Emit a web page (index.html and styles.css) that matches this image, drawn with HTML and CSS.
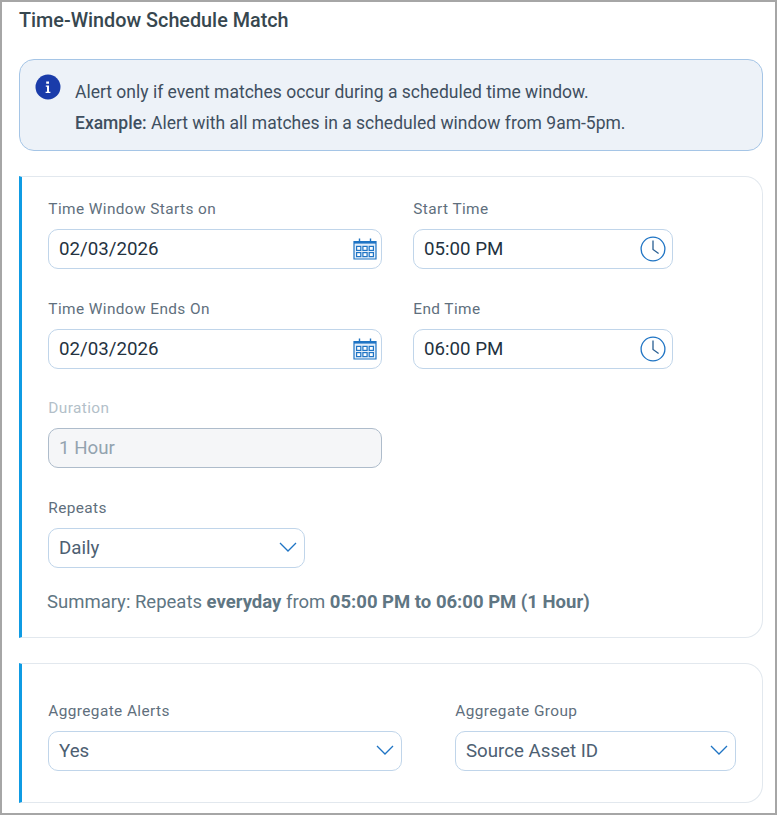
FILE: index.html
```html
<!DOCTYPE html>
<html lang="en">
<head>
<meta charset="utf-8">
<title>Time-Window Schedule Match</title>
<link rel="stylesheet" href="styles.css">
</head>
<body>
<main class="frame">
  <h1 class="title">Time-Window Schedule Match</h1>
  <section class="info">
    <svg class="info-icon" width="26" height="26" viewBox="0 0 26 26" aria-hidden="true">
      <circle cx="13" cy="13" r="12.5" fill="#1a3caa"/>
      <path d="M11.2 7.6h2.8v2.2h-2.8zM10.8 11.6h3.2v6.2h1.4v1.2h-4.8v-1.2h1.4v-5h-1.2z" fill="#fff"/>
    </svg>
    <div class="info-text">
      <p>Alert only if event matches occur during a scheduled time window.</p>
      <p><b>Example:</b> Alert with all matches in a scheduled window from 9am-5pm.</p>
    </div>
  </section>

  <section class="card card-schedule">
    <div class="grid-time">
      <div class="field">
        <label class="label">Time Window Starts on</label>
        <div class="input dark">02/03/2026
          <svg class="cal" width="24" height="24" viewBox="0 0 24 24" aria-hidden="true"><use href="#i-cal"/></svg>
        </div>
      </div>
      <div class="field">
        <label class="label">Start Time</label>
        <div class="input dark">05:00 PM
          <svg class="clk" width="26" height="26" viewBox="0 0 26 26" aria-hidden="true"><use href="#i-clk"/></svg>
        </div>
      </div>
      <div class="field">
        <label class="label">Time Window Ends On</label>
        <div class="input dark">02/03/2026
          <svg class="cal" width="24" height="24" viewBox="0 0 24 24" aria-hidden="true"><use href="#i-cal"/></svg>
        </div>
      </div>
      <div class="field">
        <label class="label">End Time</label>
        <div class="input dark">06:00 PM
          <svg class="clk" width="26" height="26" viewBox="0 0 26 26" aria-hidden="true"><use href="#i-clk"/></svg>
        </div>
      </div>
      <div class="field field-duration">
        <label class="label label-off">Duration</label>
        <div class="input disabled">1 Hour</div>
      </div>
    </div>
    <div class="field field-repeats">
      <label class="label">Repeats</label>
      <div class="input select">Daily
        <svg class="chev" width="18" height="10" viewBox="0 0 18 10" aria-hidden="true"><use href="#i-chev"/></svg>
      </div>
    </div>
    <p class="summary">Summary: Repeats <b>everyday</b> from <b>05:00 PM to 06:00 PM (1 Hour)</b></p>
  </section>

  <section class="card card-agg">
    <div class="field">
      <label class="label">Aggregate Alerts</label>
      <div class="input select">Yes
        <svg class="chev" width="18" height="10" viewBox="0 0 18 10" aria-hidden="true"><use href="#i-chev"/></svg>
      </div>
    </div>
    <div class="field">
      <label class="label">Aggregate Group</label>
      <div class="input select">Source Asset ID
        <svg class="chev" width="18" height="10" viewBox="0 0 18 10" aria-hidden="true"><use href="#i-chev"/></svg>
      </div>
    </div>
  </section>
</main>

<svg class="defs" width="0" height="0" aria-hidden="true">
  <defs>
    <symbol id="i-cal" viewBox="0 0 24 24">
      <path d="M1 4.5h22v17.5H1z" fill="#e3eefa" stroke="#1f74c4" stroke-width="1.2"/>
      <path d="M1 4h22v2.6H1z" fill="#1f74c4"/>
      <path d="M6.5 1.5v4M17.5 1.5v4" stroke="#1f74c4" stroke-width="1.4" fill="none"/>
      <g fill="#fff" stroke="#1f74c4" stroke-width="1.2">
        <rect x="3.6" y="9.4" width="4.2" height="4"/>
        <rect x="9.9" y="9.4" width="4.2" height="4"/>
        <rect x="16.2" y="9.4" width="4.2" height="4"/>
        <rect x="3.6" y="15.6" width="4.2" height="4"/>
        <rect x="9.9" y="15.6" width="4.2" height="4"/>
        <rect x="16.2" y="15.6" width="4.2" height="4"/>
      </g>
    </symbol>
    <symbol id="i-clk" viewBox="0 0 26 26">
      <circle cx="13" cy="13" r="11.9" fill="none" stroke="#1f74c4" stroke-width="1.3"/>
      <path d="M13 4.5V13.5L18.6 17.6" fill="none" stroke="#2a5f93" stroke-width="1.3"/>
    </symbol>
    <symbol id="i-chev" viewBox="0 0 18 10">
      <path d="M1 1l8 8 8-8" fill="none" stroke="#1f74c4" stroke-width="1.3"/>
    </symbol>
  </defs>
</svg>
</body>
</html>
```
FILE: styles.css
```css
* { box-sizing: border-box; }
html, body { margin: 0; padding: 0; background: #fff; }
body { font-family: Roboto, "Liberation Sans", sans-serif; }
.frame {
  width: 777px;
  height: 815px;
  border: 2px solid #a6a6a6;
  padding: 9px 12px 0 17px;
  overflow: hidden;
  background: #fff;
}
.title {
  margin: 0 0 28px;
  font-size: 19.8px;
  line-height: 20px;
  font-weight: 500;
  color: #37474f;
}
.info {
  height: 92px;
  display: flex;
  gap: 14px;
  padding: 14px 16px 0 15px;
  border: 1px solid #a5c5e6;
  border-radius: 15px;
  background: #edf2f8;
}
.info-icon { flex: none; }
.info-text { padding-top: 3px; }
.info-text p {
  margin: 0;
  font-size: 17.5px;
  line-height: 31px;
  color: #3f4f60;
}
.info-text b { font-weight: 500; }
.card {
  width: 744px;
  border: 1px solid #e2e8ee;
  border-left: 3px solid #0f9be3;
  border-radius: 0 18px 18px 0;
  background: #fff;
}
.card-schedule {
  height: 462px;
  margin-top: 25px;
  padding: 21px 0 0 26px;
}
.card-agg {
  height: 140px;
  margin-top: 25px;
  padding: 36px 0 0 26px;
  display: flex;
  gap: 53px;
}
.card-agg .field:first-child { width: 354px; }
.card-agg .field:last-child { width: 281px; }
.grid-time {
  display: grid;
  grid-template-columns: 334px 260px;
  column-gap: 31px;
  row-gap: 29px;
}
.field { display: block; }
.field-duration { margin-top: -1px; }
.field-repeats { width: 257px; margin-top: 29px; }
.label {
  display: block;
  height: 21px;
  padding: 1px 0 0 0.3px;
  margin-bottom: 10px;
  font-size: 15.4px;
  line-height: 20px;
  letter-spacing: 0.4px;
  color: #5f6f7d;
}
.label-off { color: #b3bfc9; }
.input {
  position: relative;
  height: 40px;
  padding-left: 10px;
  border: 1px solid #c0d5ea;
  border-radius: 10px;
  font-size: 18.7px;
  line-height: 39px;
  background: #fff;
}
.dark { color: #243240; }
.select { color: #4d6072; }
.disabled {
  color: #93a3af;
  background: #f5f6f8;
  border-color: #aebccb;
}
.cal { position: absolute; right: 4px; top: 7px; }
.clk { position: absolute; right: 6px; top: 6px; }
.chev { position: absolute; right: 7px; top: 13px; }
.summary {
  margin: 21px 0 0 -1px;
  font-size: 18.5px;
  line-height: 26px;
  color: #5f7683;
}
.summary b { font-weight: 700; }
.defs { position: absolute; }
```
